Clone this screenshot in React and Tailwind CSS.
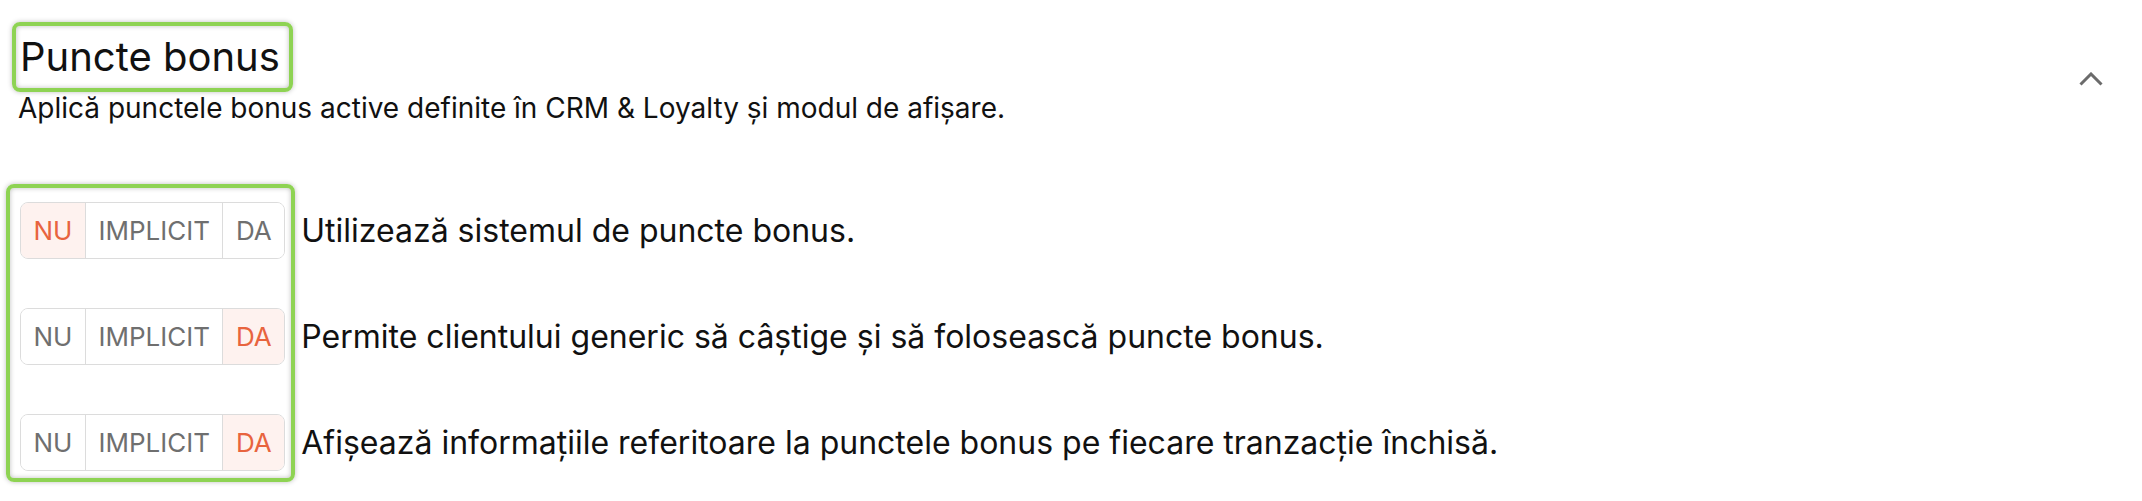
import { useState } from "react";

const OPTIONS = ["NU", "IMPLICIT", "DA"];

const SETTINGS = [
    { id: "use", label: "Utilizează sistemul de puncte bonus.", value: "NU" },
    { id: "generic", label: "Permite clientului generic să câștige și să folosească puncte bonus.", value: "DA" },
    { id: "receipt", label: "Afișează informațiile referitoare la punctele bonus pe fiecare tranzacție închisă.", value: "DA" },
];

function Segmented({ value, onChange }) {
    return (
        <div className="flex h-[57px] rounded-[8px] border border-[#dcdcdc] overflow-hidden bg-white">
            {OPTIONS.map((opt, i) => {
                const active = opt === value;
                return (
                    <button
                        key={opt}
                        onClick={() => onChange(opt)}
                        className={
                            "px-[12.5px] text-[26px] leading-[32px] " +
                            (i > 0 ? "border-l border-[#dcdcdc] " : "") +
                            (active ? "bg-[#fef2ef] text-[#e8643e]" : "bg-white text-[#6f6f6f]")
                        }
                    >
                        {opt}
                    </button>
                );
            })}
        </div>
    );
}

export default function App() {
    const [open, setOpen] = useState(true);
    const [values, setValues] = useState(
        Object.fromEntries(SETTINGS.map((s) => [s.id, s.value]))
    );

    return (
        <div className="min-h-screen bg-white text-[#111] pl-[6px] pr-[39px] pt-[22px] font-['Inter','Noto_Sans',sans-serif]">
            {/* Header */}
            <div className="flex justify-between">
                <div className="pl-[6px]">
                    <h1 className="inline-block border-4 border-[#8ed353] rounded-[8px] pl-[4px] pr-[9px] py-[4px] text-[40px] leading-[54px] font-normal shadow-[0_0_5px_rgba(0,0,0,0.25),inset_0_0_5px_rgba(0,0,0,0.25)]">
                        Puncte bonus
                    </h1>
                    <p className="pl-[6px] text-[28px] leading-[32px]">
                        Aplică punctele bonus active definite în CRM &amp; Loyalty și modul de afișare.
                    </p>
                </div>
                <button onClick={() => setOpen(!open)} className="mt-[50px] self-start">
                    <svg width="24" height="14" viewBox="0 0 24 14" fill="none">
                        <polyline
                            points={open ? "1.5,12.5 12,2 22.5,12.5" : "1.5,1.5 12,12 22.5,1.5"}
                            stroke="#6b6b6b"
                            strokeWidth="3"
                        />
                    </svg>
                </button>
            </div>

            {/* Settings */}
            {open && (
                <div className="flex mt-[60px]">
                    <div className="flex flex-col gap-[49px] border-4 border-[#8ed353] rounded-[8px] pl-[10px] pr-[6px] pt-[14px] pb-[7px] shadow-[0_0_5px_rgba(0,0,0,0.25),inset_0_0_5px_rgba(0,0,0,0.25)]">
                        {SETTINGS.map((s) => (
                            <Segmented
                                key={s.id}
                                value={values[s.id]}
                                onChange={(v) => setValues({ ...values, [s.id]: v })}
                            />
                        ))}
                    </div>
                    <div className="flex flex-col gap-[49px] pt-[18px] ml-[6px]">
                        {SETTINGS.map((s) => (
                            <div key={s.id} className="h-[57px] flex items-center text-[32px] leading-[38px]">
                                {s.label}
                            </div>
                        ))}
                    </div>
                </div>
            )}
        </div>
    );
}
